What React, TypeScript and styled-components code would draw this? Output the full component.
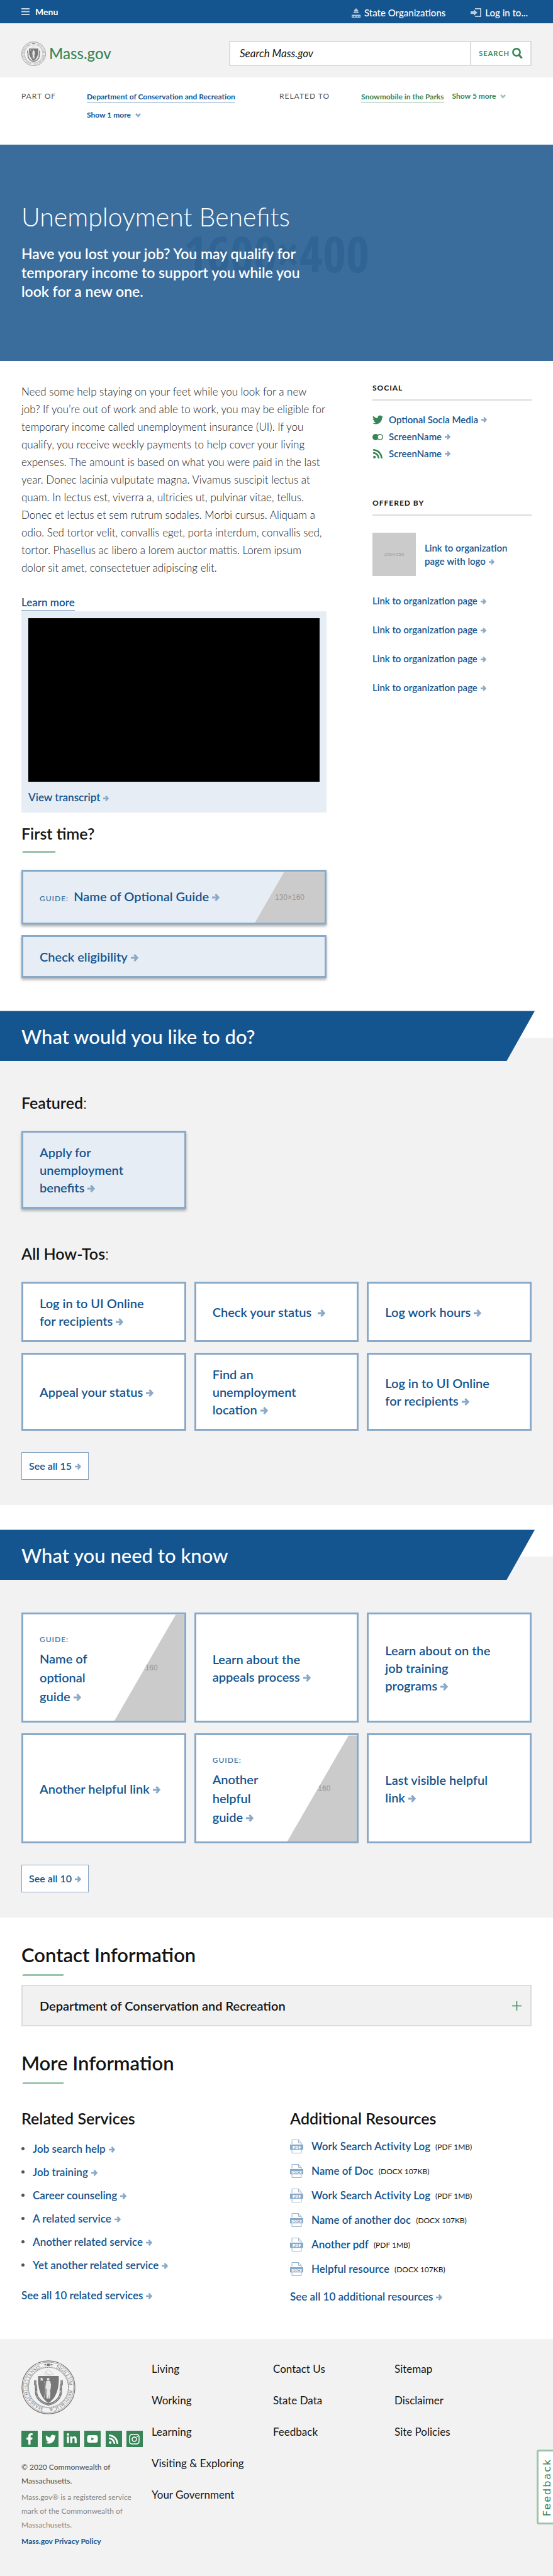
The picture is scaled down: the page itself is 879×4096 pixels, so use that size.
import React from "react";
import styled, { createGlobalStyle } from "styled-components";
import {
  FaFacebookF,
  FaTwitter,
  FaLinkedinIn,
  FaYoutube,
  FaRss,
  FaInstagram,
} from "react-icons/fa";

const c = {
  blue: "#14558f",
  blueSoft: "#89a9c8",
  blueTint: "#e6edf5",
  green: "#388557",
  greenSoft: "#9bc4aa",
  ink: "#141414",
  grey: "#f2f2f2",
  line: "#dcdcdc",
  media: "#cbcbcb",
};

const GlobalStyle = createGlobalStyle`
  *, *::before, *::after { box-sizing: border-box; }
  body { margin: 0; background: #fff; color: ${c.ink}; font: 400 17px/28px Lato, "Open Sans", sans-serif; }
  h1, h2, h3, p, ul { margin: 0; padding: 0; font-weight: inherit; }
  ul { list-style: none; }
  a { color: inherit; text-decoration: none; }
  button, input { font: inherit; color: inherit; border: 0; background: none; padding: 0; margin: 0; border-radius: 0; }
  button { cursor: pointer; }
  svg { flex: none; }
`;

const ArrowSvg = styled.svg`
  margin-left: 5px;
  color: ${c.blueSoft};
`;
const Arrow = ({ size = 9 }: { size?: number }) => (
  <ArrowSvg width={size} height={size} viewBox="0 0 12 12" fill="none" stroke="currentColor" strokeWidth="3.2" aria-hidden="true">
    <path d="M0 6H9.500M5.400 1L10 6L5.400 11" />
  </ArrowSvg>
);

const NoWrap = styled.span`
  white-space: nowrap;
`;

/* Link text whose last word always keeps its arrow. */
const Arrowed = ({ text, size }: { text: string; size?: number }) => {
  const cut = text.lastIndexOf(" ") + 1;
  return (
    <>
      {text.slice(0, cut)}
      <NoWrap>
        {text.slice(cut)}
        <Arrow size={size} />
      </NoWrap>
    </>
  );
};

const Seal = ({ size, id }: { size: number; id: string }) => (
  <svg width={size} height={size} viewBox="0 0 100 100" fill="none" stroke="#777" role="img" aria-label="Seal of Massachusetts">
    <defs>
      <path id={id} d="M50 11.5A38.5 38.5 0 1 1 49.9 11.5" />
    </defs>
    <circle cx="50" cy="50" r="49" strokeWidth="1.4" />
    <circle cx="50" cy="50" r="46.6" strokeWidth=".7" />
    <circle cx="50" cy="50" r="36.8" strokeWidth="1.2" strokeDasharray="1 .8" />
    <circle cx="50" cy="50" r="38" strokeWidth=".4" />
    <g fill="#777" stroke="none" fontFamily="'Liberation Serif', serif" fontSize="9">
      <text><textPath href={`#${id}`} startOffset="14">SIGILLUM</textPath></text>
      <text><textPath href={`#${id}`} startOffset="65">REIPUBLICÆ</textPath></text>
      <text><textPath href={`#${id}`} startOffset="130">MASSACHUSETTENSIS.</textPath></text>
      <path d="M41 8.2l5-1.8v3.6zM59 8.2l-5-1.8v3.6zM47.5 6h5v4.4h-5z" />
    </g>
    <path d="M25.5 37v7c3 4 1 12 2 18 2 10 12 18 22.500 19.500C60.500 80 70.500 72 72.500 62c1-6-1-14 2-18v-7" strokeWidth="4.2" />
    <path d="M25.500 38v6c3 4 1 12 2 18 2 10 12 18 22.500 19.500C60.500 80 70.500 72 72.500 62c1-6-1-14 2-18v-6" stroke="#ddd" strokeWidth="1.4" strokeDasharray="1 1.400" />
    <path d="M43 27c1-5 4-9 7-9 2 0 4 3 6 5l4 5M46 22l5 5M45 27h11" strokeWidth=".8" stroke="#aaa" />
    <path d="M31 29h38c1 20-3 40-19 50C34 69 30 49 31 29z" fill="#777" stroke="none" />
    <path d="M37.500 31.500l1 2.300 2.500.2-1.900 1.600.6 2.400-2.200-1.300-2.200 1.300.6-2.400-1.900-1.600 2.500-.2z" fill="#f2f2f2" stroke="none" />
    <g fill="#e6e6e6" stroke="none">
      <circle cx="49.500" cy="35" r="2.400" />
      <path d="M46 38h7l1.800 7-.8 9h-1.200l.8 8-1 8.500h-2.400L50 62l-1 8.500h-2.400L46 62l.6-8-2-3 .8-6z" />
    </g>
    <path d="M43 39c2 8 2 22-1 31" stroke="#e6e6e6" strokeWidth=".9" />
  </svg>
);

/* ---------- top bar and header ---------- */
const TopBar = styled.nav`
  display: flex;
  align-items: center;
  height: 37px;
  padding: 0 40px 0 34px;
  background: ${c.blue};
  color: #fff;
  font-weight: 700;
  line-height: 20px;
`;
const MenuButton = styled.button`
  display: flex;
  align-items: center;
  gap: 9px;
  margin-right: auto;
  font-size: 14px;
`;
const TopLink = styled.button`
  display: flex;
  align-items: center;
  gap: 6px;
  margin-left: 40px;
  padding-top: 3px;
  font-size: 15px;
  font-weight: 500;
`;
const Header = styled.header`
  display: flex;
  justify-content: space-between;
  align-items: center;
  padding: 28px 34px 18px;
  background: ${c.grey};
`;
const Brand = styled.a`
  display: flex;
  align-items: center;
  gap: 5px;
  color: ${c.green};
  font-size: 24px;
  font-weight: 500;
`;
const SearchForm = styled.form`
  display: flex;
  flex: 0 1 481px;
  height: 40px;
  border: 2px solid ${c.line};
  background: #fff;
`;
const SearchInput = styled.input`
  flex: 1;
  min-width: 0;
  padding: 0 15px;
  font-style: italic;
  &::placeholder { color: ${c.ink}; opacity: 1; }
`;
const SearchButton = styled.button`
  display: flex;
  align-items: center;
  gap: 4px;
  padding: 0 12px;
  border-left: 2px solid ${c.line};
  color: ${c.green};
  font-size: 11px;
  font-weight: 700;
  letter-spacing: 1px;
`;
const Relations = styled.div`
  display: grid;
  grid-template-columns: 104fr 306fr 130fr 271fr;
  padding: 15px 34px 32px;
  font-size: 12px;
  line-height: 30px;
`;
const RelationLabel = styled.span`
  color: #535353;
  letter-spacing: 1px;
`;
const RelationLinks = styled.div<{ $tone: string; $edge: string }>`
  display: flex;
  flex-wrap: wrap;
  align-content: flex-start;
  column-gap: 13px;
  color: ${(p) => p.$tone};
  font-weight: 700;
  a { line-height: 16px; margin: 8px 0 5px; border-bottom: 1px solid ${(p) => p.$edge}; }
  svg { color: ${(p) => p.$edge}; margin-left: 7px; }
`;
const Chevron = () => (
  <svg width="9" height="7" viewBox="0 0 10 8" fill="none" stroke="currentColor" strokeWidth="3" aria-hidden="true">
    <path d="M1 1L5 5.500L9 1" />
  </svg>
);

/* ---------- hero ---------- */
const Hero = styled.section`
  position: relative;
  padding: 91px 34px 96px;
  background: #3a6d9c;
  color: #fff;
`;
const Watermark = styled.span`
  position: absolute;
  inset: 0;
  display: flex;
  align-items: center;
  justify-content: center;
  color: #306494;
  font: 700 80px/80px "Liberation Sans Narrow", "Open Sans Condensed", "Liberation Sans", sans-serif;
`;
const HeroText = styled.div`
  position: relative;
  max-width: 464px;
  h1 { font-size: 41px; line-height: 48px; font-weight: 300; }
  p { margin-top: 19px; font-size: 23px; line-height: 30px; font-weight: 600; }
`;

/* ---------- main columns ---------- */
const Columns = styled.main`
  display: grid;
  grid-template-columns: 485fr 253fr;
  column-gap: 73px;
  padding: 35px 34px 52px;
`;
const Intro = styled.p`
  font-weight: 300;
`;
const LearnMore = styled.p`
  margin-top: 27px;
  color: ${c.blue};
  font-weight: 600;
  a { border-bottom: 1px solid ${c.blueSoft}; padding-bottom: 2px; }
`;
const VideoBox = styled.div`
  padding: 11px 11px 10px;
  background: ${c.blueTint};
`;
const Video = styled.div`
  aspect-ratio: 16 / 9;
  background: #000;
`;
const TextLink = styled.a<{ $top?: number }>`
  display: block;
  margin-top: ${(p) => p.$top ?? 0}px;
  color: ${c.blue};
  font-weight: 600;
`;
const Heading = styled.h2<{ $top?: number; $large?: boolean }>`
  margin-top: ${(p) => p.$top ?? 0}px;
  font-size: ${(p) => (p.$large ? 31 : 25)}px;
  line-height: ${(p) => (p.$large ? 38 : 32)}px;
  font-weight: 600;
  span { font-weight: 300; }
`;
const HeadingRule = styled.div<{ $wide?: boolean }>`
  width: ${(p) => (p.$wide ? 65 : 52)}px;
  height: 3px;
  margin: 12px 0 0 2px;
  background: ${c.greenSoft};
  transform: skewX(-25deg);
`;
const ActionStack = styled.div`
  display: grid;
  gap: 17px;
  margin-top: 27px;
`;
const Card = styled.a<{ $featured?: boolean; $min?: number }>`
  position: relative;
  display: flex;
  align-items: center;
  min-height: ${(p) => p.$min ?? 0}px;
  padding: 17px 30px 17px 26px;
  border: 3px solid ${c.blueSoft};
  background: ${(p) => (p.$featured ? "#e7edf5" : "#fff")};
  box-shadow: ${(p) => (p.$featured ? "0 3px 4px rgba(0,0,0,.3)" : "none")};
  color: ${c.blue};
  font-size: 20px;
  line-height: 28px;
  font-weight: 600;
`;
const Eyebrow = styled.span<{ $block?: boolean }>`
  display: ${(p) => (p.$block ? "block" : "inline")};
  margin-right: 8px;
  color: #4479a8;
  font-size: 12px;
  font-weight: 600;
  letter-spacing: 1px;
`;
const GuideText = styled.span`
  max-width: 90px;
  line-height: 30px;
`;
const CardMedia = styled.span<{ $cut: number; $shift?: number }>`
  position: absolute;
  inset: 0 0 0 auto;
  width: 111px;
  display: flex;
  align-items: center;
  justify-content: center;
  padding-right: ${(p) => p.$shift ?? 0}px;
  background: ${c.media};
  clip-path: polygon(${(p) => p.$cut}% 0, 100% 0, 100% 100%, 0 100%);
  color: #969696;
  font: 400 12px/14px "Liberation Sans Narrow", "Liberation Sans", sans-serif;
`;

/* ---------- sidebar ---------- */
const SideHeading = styled.h3<{ $top?: number }>`
  margin-top: ${(p) => p.$top ?? 0}px;
  padding-bottom: 10px;
  border-bottom: 2px solid ${c.line};
  font-size: 12px;
  line-height: 16px;
  font-weight: 700;
  letter-spacing: 1px;
`;
const SocialList = styled.ul`
  margin-top: 17px;
  color: ${c.blue};
  font-size: 15px;
  line-height: 27px;
  font-weight: 600;
  a { display: flex; align-items: center; }
  a > svg:first-child { margin-right: 9px; color: ${c.green}; }
`;
const OrgLink = styled.a`
  display: flex;
  align-items: center;
  gap: 14px;
  color: ${c.blue};
  font-size: 15px;
  line-height: 21px;
  font-weight: 600;
`;
const OrgLogo = styled.span`
  flex: none;
  width: 69px;
  height: 69px;
  background: ${c.media};
  color: #9a9a9a;
  font: 400 8px/69px "Liberation Sans Narrow", "Liberation Sans", sans-serif;
  text-align: center;
`;
const OrgName = styled.span`
  max-width: 150px;
`;
const OrgList = styled.div`
  display: grid;
  gap: 25px;
  margin-top: 27px;
  ${OrgLink}:first-child { margin-bottom: 4px; }
`;

/* ---------- banner sections ---------- */
const Band = styled.section<{ $top?: number }>`
  margin-top: ${(p) => p.$top ?? 0}px;
  background: linear-gradient(#fff 43px, ${c.grey} 43px);
`;
const Banner = styled.h2`
  height: 80px;
  margin-right: 29px;
  padding: 1px 34px 0;
  background: ${c.blue};
  clip-path: polygon(0 0, 100% 0, calc(100% - 45px) 100%, 0 100%);
  color: #fff;
  font-size: 31px;
  line-height: 80px;
  font-weight: 500;
`;
const BandBody = styled.div<{ $top: number }>`
  padding: ${(p) => p.$top}px 34px 40px;
`;
const CardGrid = styled.div<{ $top?: number }>`
  display: grid;
  grid-template-columns: repeat(3, 1fr);
  gap: 17px 13px;
  margin-top: ${(p) => p.$top ?? 0}px;
`;
const SeeAll = styled.a`
  display: inline-block;
  margin-top: 34px;
  padding: 7px 11px;
  border: 1px solid #7fa3c4;
  background: #fff;
  color: ${c.blue};
  font-size: 16px;
  font-weight: 600;
  vertical-align: top;
`;

/* ---------- contact and related ---------- */
const Info = styled.section`
  padding: 40px 34px 53px;
`;
const Accordion = styled.button`
  display: flex;
  justify-content: space-between;
  align-items: center;
  width: 100%;
  height: 66px;
  margin-top: 14px;
  padding: 0 14px 0 27px;
  border: 2px solid ${c.line};
  background: #f1f1f1;
  font-size: 20px;
  font-weight: 600;
`;
const InfoColumns = styled.div`
  display: grid;
  grid-template-columns: 427fr 384fr;
  margin-top: 38px;
`;
const BulletList = styled.ul`
  margin-top: 14px;
  color: ${c.blue};
  line-height: 37px;
  font-weight: 600;
  li { display: flex; align-items: center; }
  li::before { content: ""; width: 5px; height: 5px; margin-right: 13px; border-radius: 50%; background: #535353; }
`;
const FileList = styled.ul`
  margin-top: 9px;
  color: ${c.blue};
  line-height: 39px;
  font-weight: 600;
  a { display: flex; align-items: center; }
  svg { margin-right: 13px; }
  small { margin-left: 8px; padding-top: 2px; color: ${c.ink}; font-size: 12px; line-height: 20px; font-weight: 400; }
`;
const FileIcon = ({ kind }: { kind: string }) => (
  <svg width="21" height="22" viewBox="0 0 24 25" fill="none" stroke={c.blueSoft} aria-hidden="true">
    <path d="M3.500 8V.500H15.500L20.500 6V24.500H3.500V17M15.500 .500V6H20.500" />
    <rect x="0" y="9" width="24" height="9.500" fill={c.blueSoft} stroke="none" />
    <text x="12" y="16.700" textAnchor="middle" fill="#fff" stroke="none" fontFamily="Open Sans, sans-serif" fontWeight="800" fontSize={kind === "PDF" ? 8 : 6.500}>
      {kind}
    </text>
  </svg>
);

/* ---------- footer ---------- */
const Footer = styled.footer`
  position: relative;
  display: grid;
  grid-template-columns: 193px 193fr 193fr 232fr;
  padding: 34px 34px 44px;
  background: ${c.grey};
`;
const SocialSquares = styled.div`
  display: flex;
  justify-content: space-between;
  margin: 26px 0 21px;
  a { display: grid; place-items: center; width: 26px; height: 26px; background: ${c.green}; color: #fff; }
`;
const Legal = styled.div`
  display: grid;
  gap: 4px;
  font-size: 12px;
  line-height: 22px;
  color: #535353;
`;
const LegalLine = styled.p`
  font-weight: 500;
`;
const LegalNote = styled.p`
  color: #858585;
`;
const LegalLink = styled.a`
  color: ${c.blue};
  font-weight: 700;
`;
const SealRow = styled.div`
  height: 86px;
`;
const FooterLinks = styled.ul`
  display: grid;
  gap: 22px;
  align-content: start;
  padding-left: 14px;
`;
const FeedbackTab = styled.button`
  position: absolute;
  right: 0;
  bottom: 82px;
  width: 26px;
  height: 119px;
  border: 3px solid ${c.greenSoft};
  border-right: 0;
  border-radius: 4px 0 0 4px;
  background: #fff;
  overflow: hidden;
`;
const FeedbackLabel = styled.span`
  display: block;
  width: 28px;
  height: 113px;
  writing-mode: vertical-rl;
  transform: rotate(180deg);
  text-align: center;
  color: ${c.green};
  font: 400 16px/28px "DejaVu Sans", sans-serif;
  letter-spacing: 2px;
`;

const files = [
  ["Work Search Activity Log", "PDF", "(PDF 1MB)"],
  ["Name of Doc", "DOCX", "(DOCX 107KB)"],
  ["Work Search Activity Log", "PDF", "(PDF 1MB)"],
  ["Name of another doc", "DOCX", "(DOCX 107KB)"],
  ["Another pdf", "PDF", "(PDF 1MB)"],
  ["Helpful resource", "DOCX", "(DOCX 107KB)"],
];
const services = [
  "Job search help",
  "Job training",
  "Career counseling",
  "A related service",
  "Another related service",
  "Yet another related service",
];
const footerColumns = [
  ["Living", "Working", "Learning", "Visiting & Exploring", "Your Government"],
  ["Contact Us", "State Data", "Feedback"],
  ["Sitemap", "Disclaimer", "Site Policies"],
];
const footerIcons: [string, React.ReactNode][] = [
  ["Facebook", <FaFacebookF size={18} />],
  ["Twitter", <FaTwitter size={17} />],
  ["LinkedIn", <FaLinkedinIn size={18} />],
  ["YouTube", <FaYoutube size={18} />],
  ["RSS", <FaRss size={17} />],
  ["Instagram", <FaInstagram size={19} />],
];

const GuideCard = ({ text }: { text: string }) => (
  <Card href="#" $min={175}>
    <GuideText>
      <Eyebrow $block>GUIDE:</Eyebrow>
      <Arrowed text={text} size={12} />
    </GuideText>
    <CardMedia $cut={88} $shift={20}>130×160</CardMedia>
  </Card>
);
const LinkCard = ({ text, min }: { text: string; min?: number }) => (
  <Card href="#" $min={min}>
    <span>
      <Arrowed text={text} size={12} />
    </span>
  </Card>
);

export default function App() {
  return (
    <>
      <GlobalStyle />
      <TopBar>
        <MenuButton>
          <svg width="13" height="11" viewBox="0 0 13 11" stroke="#c5d5e5" strokeWidth="2" aria-hidden="true">
            <path d="M0 1H13M0 5.500H13M0 10H13" />
          </svg>
          Menu
        </MenuButton>
        <TopLink>
          <svg width="14" height="15" viewBox="0 0 14 15" fill="#b9cce0" aria-hidden="true">
            <path d="M6.500 0h1v1.500C9.500 2 10.500 3.500 10.500 5.500h-7C3.500 3.500 4.500 2 6.500 1.500zM3 6.200h8V8H3zM2 8.600h10v2H0v4.400h14v-4.400h-2v-2z" />
            <path d="M2 12v2M4.500 12v2M7 12v2M9.500 12v2M12 12v2M4 8.600v1.400M7 8.600v1.400M10 8.600v1.400" stroke={c.blue} strokeWidth=".9" />
          </svg>
          State Organizations
        </TopLink>
        <TopLink>
          <svg width="17" height="14" viewBox="0 0 17 14" fill="#b9cce0" aria-hidden="true">
            <path d="M0 5h5V2l6 5-6 5V9H0z" />
            <path d="M7 .900h9V13.100H7" fill="none" stroke="#b9cce0" strokeWidth="1.800" />
          </svg>
          Log in to...
        </TopLink>
      </TopBar>
      <Header>
        <Brand href="#">
          <Seal size={39} id="sealHeader" />
          Mass.gov
        </Brand>
        <SearchForm>
          <SearchInput type="search" aria-label="Search Mass.gov" placeholder="Search Mass.gov" />
          <SearchButton type="button">
            SEARCH
            <svg width="17" height="18" viewBox="0 0 17 18" fill="none" stroke="currentColor" aria-hidden="true">
              <circle cx="7" cy="7" r="5.600" strokeWidth="2.600" />
              <path d="M11 11.500L15.500 16.500" strokeWidth="3.200" />
            </svg>
          </SearchButton>
        </SearchForm>
      </Header>
      <Relations>
        <RelationLabel>PART OF</RelationLabel>
        <RelationLinks $tone={c.blue} $edge={c.blueSoft}>
          <a href="#">Department of Conservation and Recreation</a>
          <button>Show 1 more<Chevron /></button>
        </RelationLinks>
        <RelationLabel>RELATED TO</RelationLabel>
        <RelationLinks $tone={c.green} $edge={c.greenSoft}>
          <a href="#">Snowmobile in the Parks</a>
          <button>Show 5 more<Chevron /></button>
        </RelationLinks>
      </Relations>
      <Hero>
        <Watermark>1600×400</Watermark>
        <HeroText>
          <h1>Unemployment Benefits</h1>
          <p>Have you lost your job? You may qualify for temporary income to support you while you look for a new one.</p>
        </HeroText>
      </Hero>
      <Columns>
        <div>
          <Intro>
            Need some help staying on your feet while you look for a new job? If you’re out of work and able to work, you
            may be eligible for temporary income called unemployment insurance (UI). If you qualify, you receive weekly
            payments to help cover your living expenses. The amount is based on what you were paid in the last year.
            Donec lacinia vulputate magna. Vivamus suscipit lectus at quam. In lectus est, viverra a, ultricies ut,
            pulvinar vitae, tellus. Donec et lectus et sem rutrum sodales. Morbi cursus. Aliquam a odio. Sed tortor
            velit, convallis eget, porta interdum, convallis sed, tortor. Phasellus ac libero a lorem auctor mattis.
            Lorem ipsum dolor sit amet, consectetuer adipiscing elit.
          </Intro>
          <LearnMore><a href="#">Learn more</a></LearnMore>
          <VideoBox>
            <Video />
            <TextLink href="#" $top={11}><Arrowed text="View transcript" /></TextLink>
          </VideoBox>
          <Heading $top={17}>First time?</Heading>
          <HeadingRule />
          <ActionStack>
            <Card href="#" $featured $min={87}>
              <span>
                <Eyebrow>GUIDE:</Eyebrow>
                <Arrowed text="Name of Optional Guide" size={12} />
              </span>
              <CardMedia $cut={42}>130×160</CardMedia>
            </Card>
            <Card href="#" $featured>
              <span><Arrowed text="Check eligibility" size={12} /></span>
            </Card>
          </ActionStack>
        </div>
        <aside>
          <SideHeading>SOCIAL</SideHeading>
          <SocialList>
            <li><a href="#"><FaTwitter size={17} />Optional Socia Media<Arrow /></a></li>
            <li>
              <a href="#">
                <svg width="17" height="10" viewBox="0 0 17 10" aria-hidden="true">
                  <circle cx="5" cy="5" r="5" fill="currentColor" />
                  <circle cx="12" cy="5" r="4.200" fill="#fff" stroke="currentColor" strokeWidth="1.500" />
                </svg>
                ScreenName<Arrow />
              </a>
            </li>
            <li><a href="#"><FaRss size={17} />ScreenName<Arrow /></a></li>
          </SocialList>
          <SideHeading $top={57}>OFFERED BY</SideHeading>
          <OrgList>
            <OrgLink href="#">
              <OrgLogo>250×250</OrgLogo>
              <OrgName><Arrowed text="Link to organization page with logo" /></OrgName>
            </OrgLink>
            {[1, 2, 3, 4].map((n) => (
              <OrgLink href="#" key={n}><span><Arrowed text="Link to organization page" /></span></OrgLink>
            ))}
          </OrgList>
        </aside>
      </Columns>

      <Band>
        <Banner>What would you like to do?</Banner>
        <BandBody $top={50}>
          <Heading>Featured<span>:</span></Heading>
          <CardGrid $top={29}>
            <Card href="#" $featured>
              <span>Apply for<br />unemployment<br /><Arrowed text="benefits" size={12} /></span>
            </Card>
          </CardGrid>
          <Heading $top={55}>All How-Tos<span>:</span></Heading>
          <CardGrid $top={29}>
            <LinkCard text={"Log in to UI Online for\u00a0recipients"} min={96} />
            <LinkCard text={"Check your status\u00a0"} />
            <LinkCard text="Log work hours" />
            <LinkCard text="Appeal your status" />
            <Card href="#">
              <span>Find an<br />unemployment<br /><Arrowed text="location" size={12} /></span>
            </Card>
            <LinkCard text={"Log in to UI Online for\u00a0recipients"} />
          </CardGrid>
          <SeeAll href="#"><Arrowed text="See all 15" size={10} /></SeeAll>
        </BandBody>
      </Band>

      <Band $top={39}>
        <Banner>What you need to know</Banner>
        <BandBody $top={52}>
          <CardGrid>
            <GuideCard text="Name of optional guide" />
            <LinkCard text="Learn about the appeals process" />
            <Card href="#">
              <span>Learn about on the<br />job training<br /><Arrowed text="programs" size={12} /></span>
            </Card>
            <LinkCard text="Another helpful link" />
            <GuideCard text="Another helpful guide" />
            <Card href="#">
              <span>Last visible helpful<br /><Arrowed text="link" size={12} /></span>
            </Card>
          </CardGrid>
          <SeeAll href="#"><Arrowed text="See all 10" size={10} /></SeeAll>
        </BandBody>
      </Band>

      <Info>
        <Heading $large>Contact Information</Heading>
        <HeadingRule $wide />
        <Accordion aria-expanded="false">
          Department of Conservation and Recreation
          <svg width="15" height="15" viewBox="0 0 15 15" stroke={c.green} strokeWidth="1.500" aria-hidden="true">
            <path d="M0 7.500H15M7.500 0V15" />
          </svg>
        </Accordion>
        <Heading $large $top={39}>More Information</Heading>
        <HeadingRule $wide />
        <InfoColumns>
          <div>
            <Heading as="h3">Related Services</Heading>
            <BulletList>
              {services.map((s) => (
                <li key={s}><a href="#"><Arrowed text={s} size={10} /></a></li>
              ))}
            </BulletList>
            <TextLink href="#" $top={16}><Arrowed text="See all 10 related services" size={10} /></TextLink>
          </div>
          <div>
            <Heading as="h3">Additional Resources</Heading>
            <FileList>
              {files.map(([name, kind, meta], i) => (
                <li key={i}><a href="#"><FileIcon kind={kind} />{name}<small>{meta}</small></a></li>
              ))}
            </FileList>
            <TextLink href="#" $top={11}><Arrowed text="See all 10 additional resources" size={10} /></TextLink>
          </div>
        </InfoColumns>
      </Info>

      <Footer>
        <div>
          <SealRow><Seal size={86} id="sealFooter" /></SealRow>
          <SocialSquares>
            {footerIcons.map(([label, icon]) => (
              <a href="#" key={label} aria-label={label}>{icon}</a>
            ))}
          </SocialSquares>
          <Legal>
            <LegalLine>© 2020 Commonwealth of Massachusetts.</LegalLine>
            <LegalNote>Mass.gov® is a registered service mark of the Commonwealth of Massachusetts.</LegalNote>
            <LegalLink href="#">Mass.gov Privacy Policy</LegalLink>
          </Legal>
        </div>
        {footerColumns.map((links) => (
          <FooterLinks key={links[0]}>
            {links.map((l) => (
              <li key={l}><a href="#">{l}</a></li>
            ))}
          </FooterLinks>
        ))}
        <FeedbackTab><FeedbackLabel>Feedback</FeedbackLabel></FeedbackTab>
      </Footer>
    </>
  );
}
